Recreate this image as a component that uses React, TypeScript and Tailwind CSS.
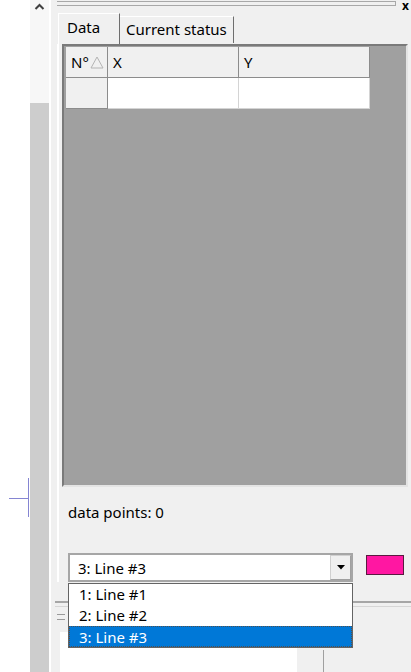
import React from 'react';

// Digitizer side panel: data grid tab, line selector and its open drop-down list

const lines = ['1: Line #1', '2: Line #2', '3: Line #3'];

const HeaderCell: React.FC<{ w: string; children?: React.ReactNode }> = ({ w, children }) => (
  <div className={`${w} h-[31px] bg-[#f0f0f0] border-r border-b border-[#8c8c8c] flex items-center pl-[5px] shrink-0`}>
    {children}
  </div>
);

export default function App() {
  const selected = 2;

  return (
    <div
      className="w-[411px] h-[672px] flex bg-white text-[15px] text-black overflow-hidden relative"
      style={{ fontFamily: '"Noto Sans", "Liberation Sans", sans-serif' }}
    >
      {/* canvas edge with the cursor cross */}
      <div className="w-[30px] bg-white relative shrink-0">
        <svg className="absolute left-0 top-[476px]" width="30" height="44" viewBox="0 0 30 44">
          <line x1="9" y1="22.5" x2="28" y2="22.5" stroke="#8585d2" strokeWidth="1" />
          <line x1="28.5" y1="2" x2="28.5" y2="41" stroke="#8585d2" strokeWidth="1" />
        </svg>
      </div>

      {/* scroll strip */}
      <div className="w-[19px] flex flex-col shrink-0">
        <div className="h-[103px] bg-[#f7f7f7] flex justify-center pt-[3px]">
          <svg width="11" height="7" viewBox="0 0 11 7">
            <polyline points="1.5,6 5.5,2 9.5,6" fill="none" stroke="#404040" strokeWidth="2" />
          </svg>
        </div>
        <div className="flex-1 bg-[#cdcdcd]" />
      </div>

      {/* docked panel */}
      <div className="flex-1 bg-[#f0f0f0] border-l-2 border-white flex flex-col relative">
        {/* title bar */}
        <div className="h-[13px] shrink-0 flex items-start relative">
          <div className="ml-[6px] mt-[1px] w-[339px] h-[5px] border border-[#a8a8a8] border-l-0" />
          <span className="absolute right-[2px] top-0 text-[12px] font-bold leading-none">x</span>
        </div>

        {/* tabs */}
        <div className="h-[31px] shrink-0 flex items-start ml-[7px]">
          <div className="w-[62px] h-[31px] border-t border-l border-white border-r border-r-[#6e6e6e] pl-[8px] pt-[3px] leading-[20px] bg-[#f0f0f0]">
            Data
          </div>
          <div className="w-[114px] h-[27px] mt-[3px] border-t border-white border-r border-r-[#6e6e6e] pl-[6px] pt-[2px] leading-[20px]">
            Current status
          </div>
        </div>

        {/* tab page */}
        <div className="ml-[6px] border-l-2 border-white pl-[3px] flex flex-col shrink-0">
          <div className="w-[346px] h-[443px] shrink-0 border-2 border-t-[#7a7a7a] border-l-[#7a7a7a] border-r-[#e4e4e4] border-b-[#e4e4e4] bg-[#a0a0a0] pt-[1px] pl-[2px]">
            <div className="flex">
              <HeaderCell w="w-[42px]">
                <span>N°</span>
                <svg width="14" height="13" viewBox="0 0 14 13" className="ml-[1px] mt-[1px]">
                  <polygon points="7,1 13,12 1,12" fill="none" stroke="#b4b4b4" strokeWidth="1" />
                </svg>
              </HeaderCell>
              <HeaderCell w="w-[131px]">X</HeaderCell>
              <HeaderCell w="w-[131px]">Y</HeaderCell>
            </div>
            <div className="flex">
              <div className="w-[42px] h-[31px] bg-[#f0f0f0] border-r border-b border-[#8c8c8c]" />
              <div className="w-[131px] h-[31px] bg-white border-r border-b border-[#d4d4d4]" />
              <div className="w-[131px] h-[31px] bg-white border-r border-b border-[#d4d4d4]" />
            </div>
          </div>

          <div className="ml-[6px] mt-[15px] leading-[20px]">data points: 0</div>

          <div className="ml-[6px] mt-[31px] flex items-start">
            <div className="w-[285px] h-[29px] border-2 border-[#a6a6a6] bg-white flex items-center">
              <span className="flex-1 pl-[8px] leading-[20px]">{lines[selected]}</span>
              <div className="w-[21px] h-[25px] bg-[#f0f0f0] border border-[#d0d0d0] border-r-[#a0a0a0] border-b-[#a0a0a0] flex items-center justify-center">
                <svg width="8" height="5" viewBox="0 0 8 5">
                  <polygon points="0,0 8,0 4,4.5" fill="#000" />
                </svg>
              </div>
            </div>
            <div className="ml-[13px] mt-[2px] w-[38px] h-[20px] bg-[#ff17a2] border border-[#5a1a40]" />
          </div>
        </div>

        {/* lower split area */}
        <div className="ml-[4px] mt-[19px] border-t-2 border-[#a6a6a6] shrink-0" />
        <div className="ml-[4px] mt-[3px] border-t border-[#d6d6d6] shrink-0" />
        <div className="ml-[6px] mt-[7px] w-[8px] h-[6px] border-y border-[#9a9a9a] shrink-0" />
        <div className="flex flex-1 min-h-0 mt-[12px]">
          <div className="ml-[9px] w-[237px] bg-white" />
          <div className="ml-[26px] w-px h-[22px] mt-[18px] bg-[#a0a0a0]" />
        </div>

        {/* open drop-down list */}
        <div className="absolute left-[17px] top-[583px] w-[285px] h-[65px] bg-white border border-[#646464] flex flex-col">
          {lines.map((l, i) => (
            <div
              key={l}
              className={
                i === selected
                  ? 'h-[21px] bg-[#0078d7] text-white pl-[9px] leading-[20px] border border-dotted border-[#505050]'
                  : 'h-[21px] pl-[10px] leading-[21px]'
              }
            >
              {l}
            </div>
          ))}
        </div>
      </div>
    </div>
  );
}
